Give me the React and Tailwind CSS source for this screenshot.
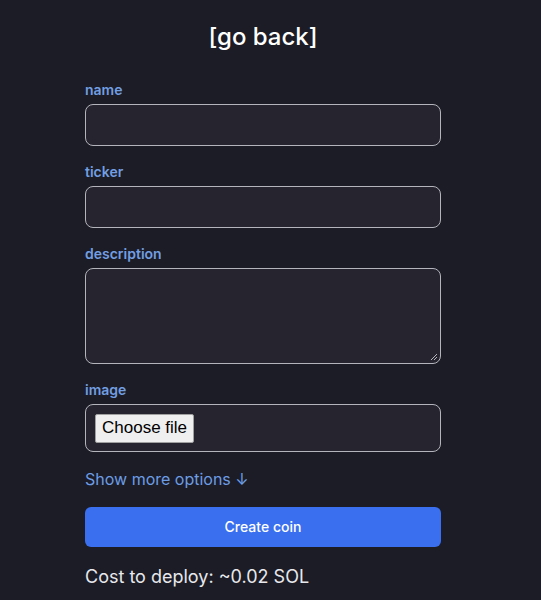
import React from "react";

function Label({ children }) {
  return (
    <label className="block text-sm leading-5 font-semibold text-[#729ee2]">{children}</label>
  );
}

export default function App() {
  return (
    <div
      className="min-h-[600px] w-full bg-[#1b1c25] text-white"
      style={{ fontFamily: "Inter, 'Noto Sans', sans-serif" }}
    >
      <div className="mr-[15px] flex flex-col items-center pt-[21px]">
        <h1 className="text-2xl leading-8 font-medium text-white">[go back]</h1>
        <div className="mt-[27px] flex w-[356px] flex-col">
          <div>
            <Label>name</Label>
            <div className="mt-1 h-[42px] rounded-lg border border-[#b4b4bc] bg-[#25242f]"></div>
          </div>
          <div className="mt-4">
            <Label>ticker</Label>
            <div className="mt-1 h-[42px] rounded-lg border border-[#b4b4bc] bg-[#25242f]"></div>
          </div>
          <div className="mt-4">
            <Label>description</Label>
            <div className="relative mt-1 h-[96px] rounded-lg border border-[#b4b4bc] bg-[#25242f]">
              <svg className="absolute right-[2px] bottom-[2px]" width="8" height="8" viewBox="0 0 8 8">
                <path d="M7 1L1 7M7 4L4 7" stroke="#b5b5bd" strokeWidth="1" />
              </svg>
            </div>
          </div>
          <div className="mt-4">
            <Label>image</Label>
            <div className="mt-1 flex h-[48px] items-center rounded-lg border border-[#b4b4bc] bg-[#25242f] pl-[9px]">
              <span
                className="inline-flex h-[29px] items-center rounded-[2px] border border-[#a0a0a0] bg-[#efefef] px-[6px] text-[17px] text-black"
                style={{ fontFamily: "'Liberation Sans', Arial, sans-serif" }}
              >
                Choose file
              </span>
            </div>
          </div>
          <div className="mt-[15px] text-base leading-6 text-[#6d9ce6]">Show more options ↓</div>
          <button className="mt-4 h-10 w-full rounded-md bg-[#3a6ff0] text-sm font-medium text-white">
            Create coin
          </button>
          <div className="mt-[16px] text-lg leading-7 text-[#e8e8ec]">Cost to deploy: ~0.02 SOL</div>
        </div>
      </div>
    </div>
  );
}
